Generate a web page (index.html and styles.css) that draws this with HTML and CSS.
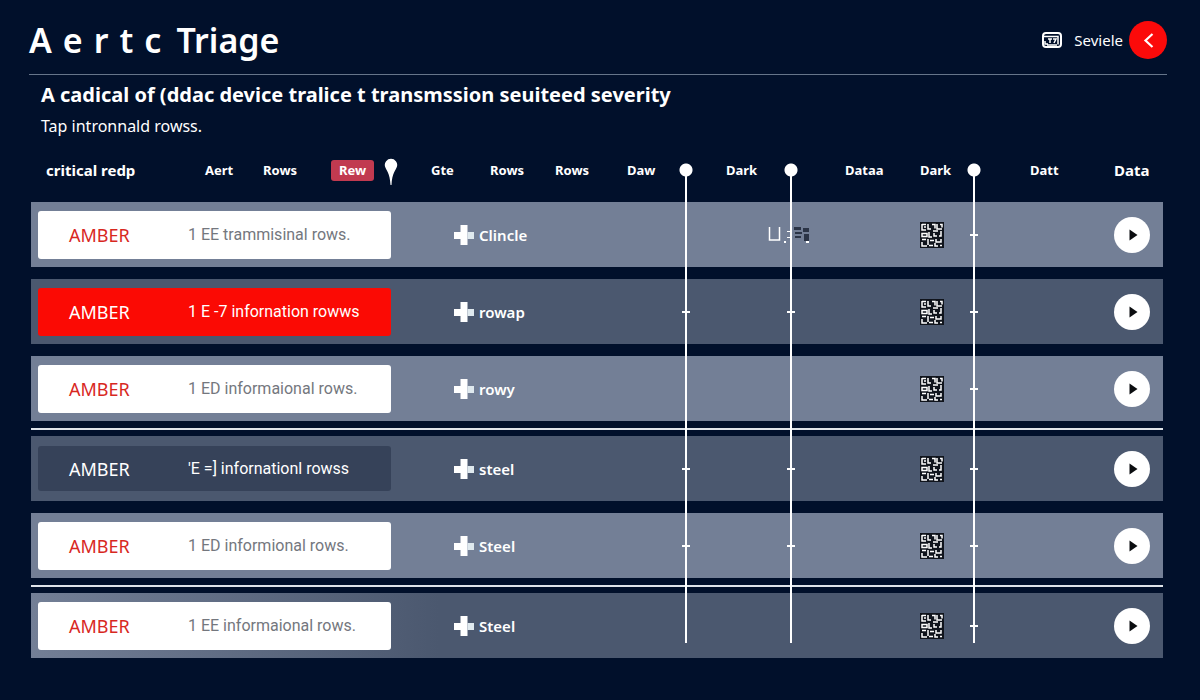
FILE: index.html
```html
<!DOCTYPE html>
<html lang="en">
	<head>
		<meta charset="utf-8">
		<title>Aertc Triage</title>
		<meta name="viewport" content="width=device-width, initial-scale=1.0">
		<link rel="stylesheet" href="styles.css">
	</head>
	<body>
		<svg class="defs" aria-hidden="true">
			<symbol id="plus" viewBox="0 0 20 20">
				<path d="M6.500 0h7v6.500h-7zM0 7h13.500v7H0zM6.500 6h7v14h-7z" fill="#fff"/>
				<path d="M13.500 7H20v7h-6.500z" fill="#dfe9ee"/>
			</symbol>
			<symbol id="play" viewBox="0 0 36 36">
				<path d="M15.500 12.500v11l8-5.500z" fill="#0b0d10"/>
			</symbol>
			<symbol id="code" viewBox="0 0 24 26">
				<path d="M0 0h24v26H0z" fill="#10141c"/>
				<path d="M2 2.500h4M2 2v6h4M8 2v5h3M12 2.500h3v4M17 2v5h5M20 2.500h2v3M4 5h2M13 9h5M2 11.500h5v3H2zM9 10v5h3M14 11v3h3M21 9v5h-2M2 17.500h4M8 17v6M10 18.500h4M16 17v3h5v-3M2 20v4h5M9 23.500h4M15 21v3h3M20 23.500h2" fill="none" stroke="#fff" stroke-width="1.500"/>
			</symbol>
		</svg>
		<header>
			<h1><span>A</span> <span>e</span> <span>r</span> <span>t</span> <span>c</span> <span class="word">Triage</span></h1>
			<nav>
				<a href="#">
					<svg width="20" height="16" viewBox="0 0 20 16"><rect x="1" y="1" width="18" height="14" rx="3" fill="none" stroke="#fff" stroke-width="2"/><path d="M2 4.500h14v8M3 9v3h3M6 7h4M8 7v4M11 7h3l-2 4M5 13h10" fill="none" stroke="#fff" stroke-width="1.500"/></svg>
					Seviele
				</a>
				<button class="back" aria-label="Back"><svg width="38" height="38" viewBox="0 0 38 38"><path d="M23.500 13l-7 6.500 7 6.500" fill="none" stroke="#fff" stroke-width="2.200"/></svg></button>
			</nav>
		</header>
		<main>
			<h2>A cadical of (ddac device tralice t transmssion seuiteed severity</h2>
			<p>Tap intronnald rowss.</p>
			<div class="board">
				<table>
					<thead>
						<tr>
							<th class="first">critical redp</th>
							<th>Aert</th>
							<th>Rows</th>
							<th><button class="tag">Rew</button></th>
							<th class="pin"><svg width="14" height="28" viewBox="0 0 14 28"><path d="M1 8.500a6.200 6.200 0 1 1 12 0C12 12 8 15 7.500 27h-1C6 15 2 12 1 8.500z" fill="#fff"/></svg></th>
							<th>Gte</th>
							<th>Rows</th>
							<th>Rows</th>
							<th>Daw</th>
							<th></th>
							<th>Dark</th>
							<th></th>
							<th>Dataa</th>
							<th>Dark</th>
							<th></th>
							<th>Datt</th>
							<th class="last">Data</th>
						</tr>
					</thead>
					<tbody>
						<tr>
							<td class="info"><div class="card"><span class="level">AMBER</span><span>1 EE trammisinal rows.</span></div></td>
							<td class="kind"><svg width="20" height="20"><use href="#plus"/></svg>Clincle</td>
							<td class="mark"><svg width="42" height="18" viewBox="0 0 42 18"><path d="M1.500 1v13h10V1" fill="none" stroke="#fff" stroke-width="1.500"/><path d="M16 15h2v2h-2zM19 5h4v1h-4zM19 11h4v1h-4zM38 15h3v2h-3z" fill="#fff"/><path d="M26 1h7v3h-7zM27 6h7v2h-7zM27 10h6v2h-6zM35 2h6v4h-6zM36 8h5v7h-5z" fill="#2b3446"/></svg></td>
							<td class="qr"><svg width="24" height="26"><use href="#code"/></svg></td>
							<td class="tick c"></td>
							<td class="action"><button aria-label="Play"><svg width="36" height="36"><use href="#play"/></svg></button></td>
						</tr>
						<tr class="dim">
							<td class="info"><div class="card red"><span class="level">AMBER</span><span>1 E -7 infornation rowws</span></div></td>
							<td class="kind"><svg width="20" height="20"><use href="#plus"/></svg>rowap</td>
							<td class="tick a"></td>
							<td class="tick b"></td>
							<td class="qr"><svg width="24" height="26"><use href="#code"/></svg></td>
							<td class="tick c"></td>
							<td class="action"><button aria-label="Play"><svg width="36" height="36"><use href="#play"/></svg></button></td>
						</tr>
						<tr>
							<td class="info"><div class="card"><span class="level">AMBER</span><span>1 ED informaional rows.</span></div></td>
							<td class="kind"><svg width="20" height="20"><use href="#plus"/></svg>rowy</td>
							<td class="qr"><svg width="24" height="26"><use href="#code"/></svg></td>
							<td class="tick c"></td>
							<td class="action"><button aria-label="Play"><svg width="36" height="36"><use href="#play"/></svg></button></td>
						</tr>
						<tr class="dim ruled">
							<td class="info"><div class="card slate"><span class="level">AMBER</span><span>'E =] infornationl rowss</span></div></td>
							<td class="kind"><svg width="20" height="20"><use href="#plus"/></svg>steel</td>
							<td class="tick a"></td>
							<td class="tick b"></td>
							<td class="qr"><svg width="24" height="26"><use href="#code"/></svg></td>
							<td class="tick c"></td>
							<td class="action"><button aria-label="Play"><svg width="36" height="36"><use href="#play"/></svg></button></td>
						</tr>
						<tr>
							<td class="info"><div class="card"><span class="level">AMBER</span><span>1 ED informional rows.</span></div></td>
							<td class="kind"><svg width="20" height="20"><use href="#plus"/></svg>Steel</td>
							<td class="tick a"></td>
							<td class="tick b"></td>
							<td class="qr"><svg width="24" height="26"><use href="#code"/></svg></td>
							<td class="tick c"></td>
							<td class="action"><button aria-label="Play"><svg width="36" height="36"><use href="#play"/></svg></button></td>
						</tr>
						<tr class="fade ruled">
							<td class="info"><div class="card"><span class="level">AMBER</span><span>1 EE informaional rows.</span></div></td>
							<td class="kind"><svg width="20" height="20"><use href="#plus"/></svg>Steel</td>
							<td class="qr"><svg width="24" height="26"><use href="#code"/></svg></td>
							<td class="tick c"></td>
							<td class="action"><button aria-label="Play"><svg width="36" height="36"><use href="#play"/></svg></button></td>
						</tr>
					</tbody>
				</table>
				<div class="tracks">
					<div class="track a"></div>
					<div class="track b"></div>
					<div class="track c"></div>
				</div>
			</div>
		</main>
	</body>
</html>
```
FILE: styles.css
```css
* {
	box-sizing: border-box;
}
html {
	font: 16px 'Noto Sans', 'Open Sans', sans-serif;
}
body {
	margin: 0;
	background-color: #01102b;
	color: #fff;
}
.defs {
	position: absolute;
	width: 0;
	height: 0;
}
header {
	display: flex;
	justify-content: space-between;
	align-items: center;
	margin: 0 33px 0 29px;
	height: 75px;
	padding-top: 6px;
	border-bottom: 1px solid #66758a;
}
h1 {
	display: flex;
	gap: 11px;
	margin: 0;
	font-size: 34px;
	line-height: 40px;
	font-weight: 600;
}
.word {
	margin-left: 4px;
}
nav, nav a {
	display: flex;
	align-items: center;
}
nav a {
	gap: 12px;
	margin-right: 6px;
	color: inherit;
	font-size: 15px;
	text-decoration: none;
}
button {
	display: block;
	margin: 0;
	padding: 0;
	border: 0;
	color: inherit;
	font: inherit;
	cursor: pointer;
}
svg {
	display: block;
	flex: none;
}
.back {
	border-radius: 50%;
	background-color: #fb0a0a;
}
main {
	padding: 0 37px 0 31px;
}
h2, p {
	margin: 0 10px;
}
h2 {
	padding-top: 4px;
	font-size: 20px;
	line-height: 32px;
	font-weight: 700;
}
p {
	padding-top: 3px;
	line-height: 24px;
}
.board {
	position: relative;
	margin-top: 16px;
}
table, thead, tbody {
	display: block;
}
tr, .tracks {
	display: grid;
	grid-template-columns: 174fr 58fr 68fr 53fr 47fr 59fr 65fr 72fr 52fr 47fr 58fr 61fr 75fr 47fr 63fr 84fr 49fr;
	align-items: center;
}
th, td {
	min-width: 0;
	padding: 0;
	text-align: left;
}
thead tr {
	height: 32px;
	margin-bottom: 16px;
	font-size: 13px;
}
thead .first {
	padding-left: 15px;
	font-size: 15px;
}
thead .last {
	font-size: 15px;
}
.pin {
	align-self: end;
}
.tag {
	width: 43px;
	height: 21px;
	border-radius: 3px;
	background-color: #c13a50;
}
tbody {
	display: grid;
	gap: 12px;
}
tbody tr {
	position: relative;
	height: 65px;
	background-color: #737f96;
}
tbody .dim {
	background-color: #4b586f;
}
tbody .fade {
	background: linear-gradient(90deg, #737f96, #4b586f 36%);
}
tbody .ruled {
	margin-top: 3px;
}
.ruled::before {
	content: '';
	position: absolute;
	top: -8px;
	left: 0;
	right: 0;
	height: 2px;
	background-color: #dfe4ea;
}
td {
	grid-row: 1;
}
.info {
	grid-column: 1 / 6;
	padding: 0 40px 0 7px;
}
.card {
	display: flex;
	align-items: center;
	height: 48px;
	padding-left: 31px;
	border-radius: 3px;
	background-color: #fff;
	color: #74777e;
	font-family: Roboto, 'Noto Sans', sans-serif;
	white-space: nowrap;
}
.level {
	width: 119px;
	color: #d8281f;
	font-family: 'Noto Sans', sans-serif;
	font-size: 18px;
}
.red {
	background-color: #fb0a04;
	color: #fff;
}
.slate {
	height: 45px;
	background-color: #364259;
	color: #fff;
}
.red .level, .slate .level {
	color: inherit;
}
.kind {
	grid-column: 6 / 10;
	display: flex;
	align-items: center;
	gap: 5px;
	padding-left: 23px;
	font-size: 15px;
	font-weight: 600;
}
.mark {
	grid-column: 11 / 13;
	padding-left: 42px;
}
.qr {
	grid-column: 14;
}
.action {
	grid-column: 17;
}
.action button {
	border-radius: 50%;
	background-color: #fff;
}
.tick {
	width: 8px;
	height: 2px;
	margin-left: 3px;
	background-color: #fff;
}
.a {
	grid-column: 10;
}
.b {
	grid-column: 12;
}
.c {
	grid-column: 15;
}
.tracks {
	position: absolute;
	inset: 9px 0 15px;
	align-items: stretch;
	pointer-events: none;
}
/* the dot sits on top of a 2px line */
.track {
	grid-row: 1;
	width: 14px;
	background: radial-gradient(circle at 7px 7px, #fff 6px, transparent 7px), linear-gradient(#fff, #fff) 6px 7px / 2px 100% no-repeat;
}
```
